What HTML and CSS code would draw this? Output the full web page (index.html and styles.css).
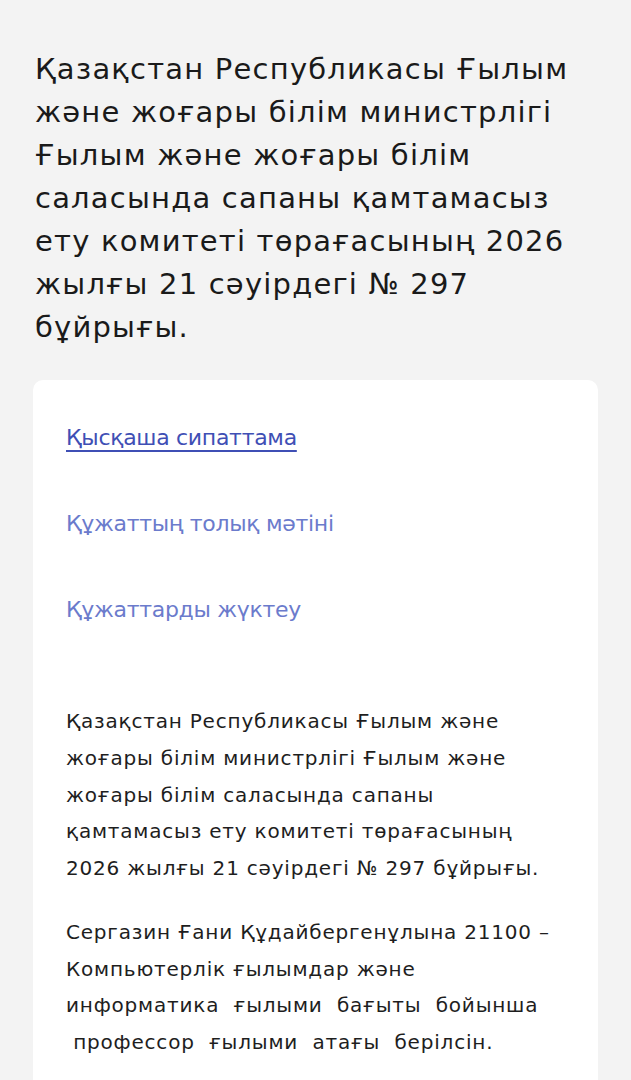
FILE: index.html
```html
<!DOCTYPE html>
<html lang="kk">
<head>
<meta charset="utf-8">
<link rel="stylesheet" href="styles.css">
</head>
<body>
<main class="page">
  <h1 class="title">Қазақстан Республикасы Ғылым және жоғары білім министрлігі Ғылым және жоғары білім саласында сапаны қамтамасыз ету комитеті төрағасының 2026 жылғы 21 сәуірдегі № 297 бұйрығы.</h1>
  <section class="card">
    <nav class="links">
      <a class="link active" href="#">Қысқаша сипаттама</a>
      <a class="link" href="#">Құжаттың толық мәтіні</a>
      <a class="link" href="#">Құжаттарды жүктеу</a>
    </nav>
    <div class="body">
      <p>Қазақстан Республикасы Ғылым және жоғары білім министрлігі Ғылым және жоғары білім саласында сапаны қамтамасыз ету комитеті төрағасының 2026 жылғы 21 сәуірдегі № 297 бұйрығы.</p>
      <p>Сергазин Ғани Құдайбергенұлына 21100 – Компьютерлік ғылымдар және<br>информатика&nbsp; ғылыми&nbsp; бағыты&nbsp; бойынша<br>&nbsp;профессор&nbsp; ғылыми&nbsp; атағы&nbsp; берілсін.</p>
    </div>
  </section>
</main>
</body>
</html>
```
FILE: styles.css
```css
html, body {
  margin: 0;
  padding: 0;
  background: #f3f3f3;
}
body {
  font-family: "DejaVu Sans", "Noto Sans", sans-serif;
  color: #1c1c1c;
}
.page {
  padding: 48px 33px 0 33px;
}
.title {
  margin: 0 0 31px 2px;
  font-size: 29px;
  font-weight: 400;
  line-height: 43px;
  letter-spacing: 1.2px;
  color: #1a1a1a;
}
.card {
  background: #ffffff;
  border-radius: 10px;
  padding: 43px 33px 30px 33px;
}
.links {
  display: flex;
  flex-direction: column;
  gap: 56px;
  align-items: flex-start;
}
.link {
  font-size: 22px;
  line-height: 30px;
  letter-spacing: -0.3px;
  color: #6b7bcc;
  text-decoration: none;
}
.link.active {
  color: #3f4fb5;
  text-decoration: underline;
  text-decoration-thickness: 2px;
  text-underline-offset: 5px;
}
.body {
  margin-top: 78px;
}
.body p {
  margin: 0 0 27px 0;
  font-size: 20px;
  line-height: 36.75px;
  letter-spacing: 0.8px;
  color: #1e1e1e;
}
```
